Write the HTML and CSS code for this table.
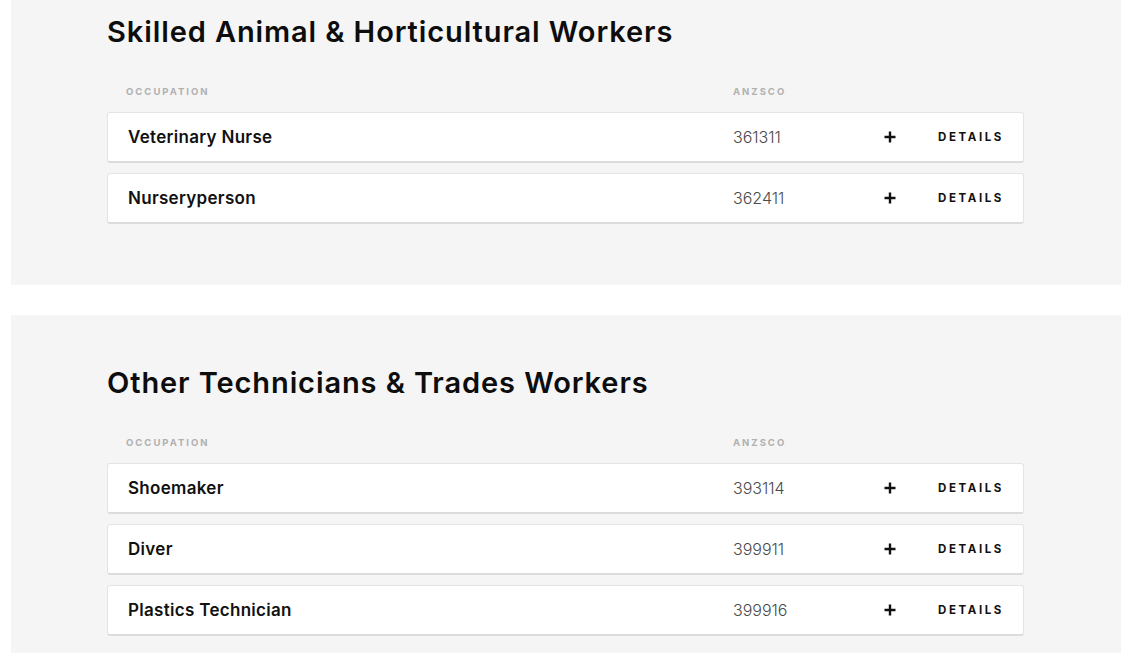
FILE: index.html
```html
<!DOCTYPE html>
<html lang="en">
<head>
<meta charset="utf-8">
<title>Occupations</title>
<link rel="stylesheet" href="styles.css">
</head>
<body>
<div class="page">
  <section class="group">
    <h2 class="group-title">Skilled Animal &amp; Horticultural Workers</h2>
    <div class="table-head">
      <span class="th th-occ">Occupation</span>
      <span class="th th-code">ANZSCO</span>
    </div>
    <div class="rows">
      <div class="row">
        <span class="occ">Veterinary Nurse</span>
        <span class="code">361311</span>
        <svg class="plus" viewBox="0 0 12 12" width="12" height="12"><path d="M6 0.5V11.5M0.5 6H11.5" stroke="#111" stroke-width="2.4"/></svg>
        <span class="details">Details</span>
      </div>
      <div class="row">
        <span class="occ">Nurseryperson</span>
        <span class="code">362411</span>
        <svg class="plus" viewBox="0 0 12 12" width="12" height="12"><path d="M6 0.5V11.5M0.5 6H11.5" stroke="#111" stroke-width="2.4"/></svg>
        <span class="details">Details</span>
      </div>
    </div>
  </section>
  <section class="group">
    <h2 class="group-title">Other Technicians &amp; Trades Workers</h2>
    <div class="table-head">
      <span class="th th-occ">Occupation</span>
      <span class="th th-code">ANZSCO</span>
    </div>
    <div class="rows">
      <div class="row">
        <span class="occ">Shoemaker</span>
        <span class="code">393114</span>
        <svg class="plus" viewBox="0 0 12 12" width="12" height="12"><path d="M6 0.5V11.5M0.5 6H11.5" stroke="#111" stroke-width="2.4"/></svg>
        <span class="details">Details</span>
      </div>
      <div class="row">
        <span class="occ">Diver</span>
        <span class="code">399911</span>
        <svg class="plus" viewBox="0 0 12 12" width="12" height="12"><path d="M6 0.5V11.5M0.5 6H11.5" stroke="#111" stroke-width="2.4"/></svg>
        <span class="details">Details</span>
      </div>
      <div class="row">
        <span class="occ">Plastics Technician</span>
        <span class="code">399916</span>
        <svg class="plus" viewBox="0 0 12 12" width="12" height="12"><path d="M6 0.5V11.5M0.5 6H11.5" stroke="#111" stroke-width="2.4"/></svg>
        <span class="details">Details</span>
      </div>
    </div>
  </section>
</div>
</body>
</html>
```
FILE: styles.css
```css
html, body {
  margin: 0;
  padding: 0;
  background: #ffffff;
}
body {
  font-family: "Inter", "Liberation Sans", sans-serif;
  color: #111;
  overflow: hidden;
}
.page {
  margin-top: -36px;
  padding: 0 10px 0 11px;
}
.group {
  background: #f5f5f5;
  padding: 50px 97px 61px 96px;
  margin-bottom: 30px;
}
.group-title {
  margin: 0;
  font-size: 29px;
  line-height: 36px;
  font-weight: 600;
  color: #0d0d0d;
  letter-spacing: 0.9px;
}
.table-head {
  display: flex;
  margin-top: 35px;
  padding-left: 19px;
  height: 14px;
  align-items: center;
}
.th {
  font-size: 9.5px;
  font-weight: 700;
  letter-spacing: 2px;
  text-transform: uppercase;
  color: #b0b0b0;
  line-height: 14px;
}
.th-occ {
  width: 607px;
}
.rows {
  margin-top: 13px;
  display: flex;
  flex-direction: column;
  gap: 10px;
}
.row {
  display: flex;
  align-items: center;
  height: 48px;
  background: #fff;
  border: 1px solid #e4e4e4;
  border-bottom: 2px solid #dcdcdc;
  border-radius: 3px;
  padding: 0 19px 0 20px;
}
.occ {
  width: 605px;
  font-size: 17px;
  font-weight: 600;
  color: #111;
  letter-spacing: 0.3px;
}
.code {
  width: 151px;
  font-size: 16px;
  font-weight: 300;
  color: #4a4a4a;
}
.plus {
  flex: none;
  display: block;
}
.details {
  margin-left: auto;
  font-size: 11.5px;
  font-weight: 700;
  letter-spacing: 2.6px;
  text-transform: uppercase;
  color: #111;
}
```
